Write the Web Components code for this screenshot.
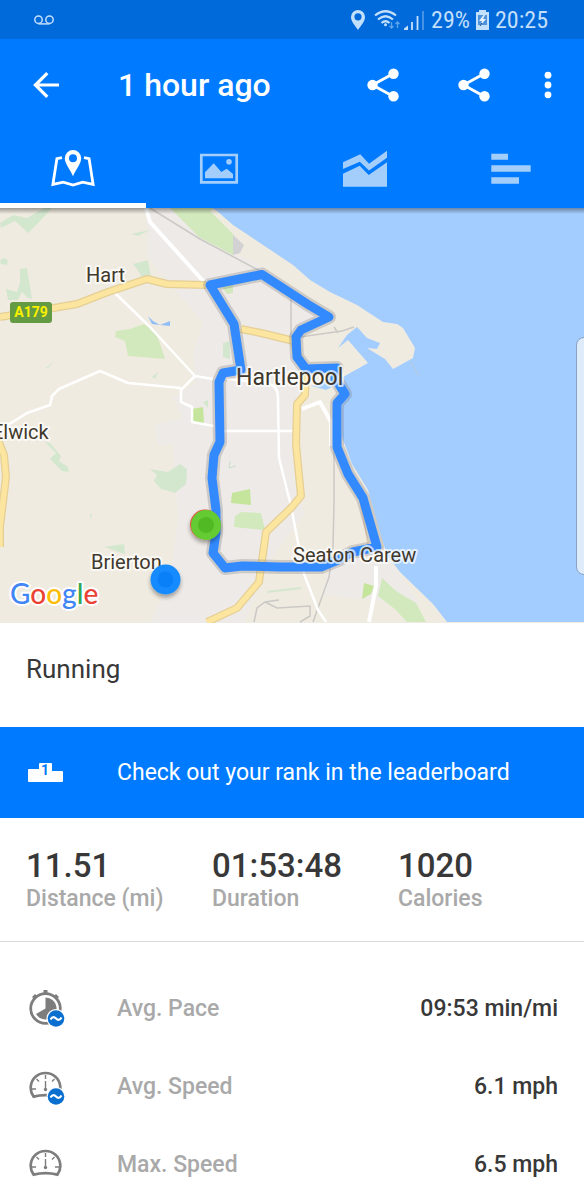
<!DOCTYPE html>
<html lang="en">
<head>
<meta charset="utf-8">
<meta name="viewport" content="width=device-width, initial-scale=1">
<title>1 hour ago</title>
<style>
  body {
    margin: 0;
    background: #fff;
    color: #383838;
    font-family: Roboto, "Liberation Sans", sans-serif;
  }
</style>
</head>
<body>
<activity-page></activity-page>

<script>
// shared by every element: attach the root and fill it
class BaseElement extends HTMLElement {
  constructor() {
    super();
    this.attachShadow({ mode: 'open' });
  }

  connectedCallback() {
    this.shadowRoot.innerHTML = this.render();
  }
}

class StatusBar extends BaseElement {
  render() {
    return `
      <style>
        :host {
          display: flex;
          align-items: center;
          height: 39px;
          padding: 0 36px 0 34px;
          background: #006ada;
          color: #c2dffb;
          font-family: "Roboto Condensed", Roboto, sans-serif;
          font-size: 24px;
          line-height: 40px;
          white-space: nowrap;
        }
        svg { display: block; }
        .system {
          display: flex;
          align-items: center;
          gap: 6px;
          margin-left: auto;
        }
      </style>
      <svg width="20" height="10" viewBox="0 0 20 10" fill="none" stroke="currentColor" stroke-width="1.5">
        <circle cx="4.5" cy="4.7" r="3.7"/><circle cx="15.5" cy="4.7" r="3.7"/><path d="M4.5 8.9h11"/>
      </svg>
      <div class="system">
        <svg width="14" height="20" viewBox="0 0 14 20" fill="currentColor">
          <path fill-rule="evenodd" d="M7 0a7 7 0 0 1 7 7c0 4.500-4 8.500-7 13-3-4.500-7-8.500-7-13a7 7 0 0 1 7-7zm0 3.200a3.600 3.600 0 1 0 0 7.200 3.600 3.600 0 0 0 0-7.200z"/>
        </svg>
        <svg width="54" height="20" viewBox="0 0 54 20" fill="none" stroke="currentColor" stroke-width="2.200">
          <path d="M4 5.500q10.500-8.500 21 0M7 9.500q7.500-6.500 15 0M10.500 13q4-3.500 8 0"/>
          <circle cx="14.500" cy="14.800" r="1.500" fill="currentColor" stroke="none"/>
          <path d="M20.500 12v6m-2-2l2 2 2-2M26.500 18v-6m-2 2l2-2 2 2" stroke-width="1.300" opacity=".5"/>
          <path d="M33 20v-1.500l4-3v4.500z" fill="currentColor" stroke="none"/>
          <path d="M41 20v-8M46.500 20V6" stroke-width="1.800"/>
          <path d="M52 20V1" stroke-width="1.800" opacity=".4"/>
        </svg>
        <span>29%</span>
        <svg width="13" height="20" viewBox="0 0 13 20">
          <path fill="currentColor" d="M3 0h7v2h3v18H0V2h3z"/>
          <path d="M2 5h9v10H2z" fill="#4f92dc"/>
          <path d="M7.500 5L3 11h3l-2 5 6-7H7l2-4z" fill="#e6f3ff"/>
          <path d="M4 16l2-3" stroke="#134a84"/>
        </svg>
        <time>20:25</time>
      </div>`;
  }
}

class ActionBar extends BaseElement {
  render() {
    const share = `
      <svg width="34" height="34" viewBox="0 0 34 34" fill="currentColor">
        <path d="M27.500 5.500L6.500 17l21 11.500" fill="none" stroke="currentColor" stroke-width="2.800"/>
        <circle cx="27.500" cy="5.700" r="5.200"/><circle cx="6.500" cy="17" r="5.200"/><circle cx="27.500" cy="28.300" r="5.200"/>
      </svg>`;
    return `
      <style>
        :host {
          display: flex;
          align-items: center;
          height: 91px;
          padding: 0 7px 0 26px;
          color: #fff;
        }
        h1 {
          flex: 1;
          margin: 0 0 0 52px;
          font-size: 32px;
          font-weight: 500;
          line-height: 40px;
          white-space: nowrap;
        }
        button {
          display: flex;
          align-items: center;
          justify-content: center;
          height: 64px;
          padding: 0;
          border: 0;
          background: none;
          color: inherit;
        }
        .back { width: 40px; }
        .share { width: 91px; }
        .more { width: 58px; }
      </style>
      <button class="back" aria-label="Back">
        <svg width="26" height="26" viewBox="0 0 26 26" fill="none" stroke="currentColor" stroke-width="3.200">
          <path d="M26 13H3M14.300 1.200L2.400 13l11.900 11.800"/>
        </svg>
      </button>
      <h1><slot></slot></h1>
      <button class="share" aria-label="Share activity">${share}</button>
      <button class="share" aria-label="Share">${share}</button>
      <button class="more" aria-label="More options">
        <svg width="8" height="28" viewBox="0 0 8 28" fill="currentColor">
          <circle cx="4" cy="4.200" r="3.400"/><circle cx="4" cy="14" r="3.400"/><circle cx="4" cy="23.800" r="3.400"/>
        </svg>
      </button>`;
  }
}

class TabBar extends BaseElement {
  render() {
    return `
      <style>
        :host { display: block; }
        nav {
          display: grid;
          grid-template-columns: repeat(4, 1fr);
          height: 78px;
        }
        button {
          display: flex;
          align-items: center;
          justify-content: center;
          padding: 5px 0 0;
          border: 0;
          border-bottom: 5px solid transparent;
          background: none;
          color: #a3cefb;
        }
        button[aria-selected="true"] {
          border-color: #fff;
          color: #fff;
        }
      </style>
      <nav role="tablist">
        <button role="tab" aria-selected="true" aria-label="Map">
          <svg width="44" height="40" viewBox="0 0 44 40" fill="none" stroke="currentColor" stroke-width="2.800">
            <path d="M11 8.700L5.900 9.700 1.900 35.400l10.400-2.300 9.700 3 9.700-3 10.400 2.300-4-25.700-5.100-1"/>
            <path d="M22 1a8.200 8.200 0 0 1 8.200 8.200c0 5-5 10.800-8.200 18-3.200-7.200-8.200-13-8.200-18A8.200 8.200 0 0 1 22 1zm0 4.200a4 4 0 1 0 0 8 4 4 0 0 0 0-8z" fill="currentColor" fill-rule="evenodd" stroke="none"/>
          </svg>
        </button>
        <button role="tab" aria-selected="false" aria-label="Photos">
          <svg width="44" height="40" viewBox="0 0 44 40" fill="currentColor">
            <path d="M4.300 6h35.400v27.400H4.300z" fill="none" stroke="currentColor" stroke-width="2.700"/>
            <path d="M8 29.300v-6l8.700-9 7.600 8.700 5.400-3.300L36 25v4.300z"/><circle cx="32" cy="12.700" r="2.800"/>
          </svg>
        </button>
        <button role="tab" aria-selected="false" aria-label="Graphs">
          <svg width="44" height="40" viewBox="0 0 44 40" fill="currentColor">
            <path d="M0 13.300l17.300-8L26 14.700l18-13v7L26 21.500l-9.200-8.800L0 20z"/>
            <path d="M0 24.700l16.700-8 9 9.300L44 13.300v24.400H0z"/>
          </svg>
        </button>
        <button role="tab" aria-selected="false" aria-label="Splits">
          <svg width="44" height="40" viewBox="0 0 44 40" fill="currentColor">
            <path d="M2.300 4.700H19v6H2.300zM2.300 16.300h39.400v6.400H2.300zM2.300 28.300H30v6.400H2.300z"/>
          </svg>
        </button>
      </nav>`;
  }
}

class RouteMap extends BaseElement {
  render() {
    return `
      <style>
        :host {
          display: block;
          position: relative;
          overflow: hidden;
          background: #f0ebe0;
        }
        svg { display: block; width: 100%; height: auto; }
        text {
          fill: #3f382c;
          font-family: Roboto, sans-serif;
          font-size: 20px;
          paint-order: stroke;
          stroke: #fff;
          stroke-opacity: .7;
          stroke-width: 4px;
          stroke-linejoin: round;
        }
        .town { font-size: 23px; }
        .sign { fill: #fbf000; font-size: 14px; font-weight: 700; stroke: none; }
        .brand { font-family: Lato, sans-serif; font-size: 28px; font-weight: 500; stroke-opacity: 1; }
        .edge {
          position: absolute;
          top: 129px;
          right: -8px;
          width: 16px;
          height: 238px;
          box-sizing: border-box;
          border: 1px solid #8aa3c4;
          border-radius: 8px;
          background: #deebfa;
        }
      </style>
      <svg viewBox="0 208 584 415" role="img" aria-label="Route map of Hartlepool">
        <defs>
          <filter id="drop" x="-50%" y="-50%" width="200%" height="200%">
            <feDropShadow dx="0" dy="3" stdDeviation="2" flood-opacity=".35"/>
          </filter>
          <linearGradient id="shade" x2="0" y2="1">
            <stop offset="0" stop-opacity=".35"/><stop offset="1" stop-opacity="0"/>
          </linearGradient>
        </defs>
        <!-- built-up areas -->
        <path fill="#eeeae7" d="M147 208h28l35 33 53 26 65 48-28 18 2 45-8 75 10 62-30 40-30 68H150l20-44 8-60-5-70 10-30-10-22 22-14-2-30 10-30-55-65z"/>
        <path fill="#eeeae7" d="M330 566l50-22 40 60-60-5-38-5zM155 425l30-8 5 25-32 4z"/>
        <!-- parks and woods -->
        <g fill="#d2e9bd">
          <path d="M170 208h45l-5 3 24 24-1 20-34-18z"/>
          <path d="M116 331l14-2 14-5 12 8 5 15 4 12-37-3-3-15-10-4z"/>
          <path d="M221 286l12-1v8l-6 1z"/>
          <path d="M235 516l6-4 20 1 4 17-31-3z"/>
          <path d="M382 578l14 13 20 12 10 19h-19l-12-13-17-13z"/>
        </g>
        <g fill="#c5e49c">
          <path d="M192 409l11-2 1 16-12-1zM232 493l18-4 1 16-20-2zM364 583l10 3-3 8-9 5z"/>
        </g>
        <g fill="#d3e7cf">
          <path d="M0 223l13-8 14 3 17-10h8l-13 14-11 11-13-12-14 7zM0 261l3-3 5 2-1 5-6-1zM20 269l7-1 5 31-4-1-6-6-4 8H8l-2-11 11 3 3-9zM133 264l15-4 3 17-8 2-6-10zM131 234l19-4-12 6zM46 368l9-8-7 8zM152 377l6-5-3 7z"/>
          <path d="M45 442l5 1 11 13-2 5 9 6 1 5-7-1-12-12 6-6zM150 469l18 3 12-8 7 5-1 15-11 9-6-2-8-2-7-8 3-6zM104 547l20-3 1 10zM90 514l2 0-1 6zM223 343l7-2v18l-7-2zM203 402l5-2v8zM267 591l34-4v2l-34 4z"/>
        </g>
        <path fill="#90bff8" d="M148 316l5 5 7 4-8-1zM160 325l10-4v5z"/>
        <path fill="#d2d1d3" d="M233 235l11 10-4 8-7 2z"/>
        <!-- sea and harbour -->
        <path fill="#a4cdff" d="M584 208H212l5 3 16 14 27 18 33 22 17 15 20 12 27 13 26 17 14 2 6 4 12 20-2 10-20 11-8-10-18-11 10 1 3-6-13-5-10-11-10 8-9 13 10-8 20 23-25 14 4 15-5 10v35l10 27 16 26 14 49 5 16 13 17 33 32 14 18h137z"/>
        <path fill="#a4cdff" d="M312 386l18-7 6 6-10 5z"/>
        <path d="M410 361l9 15" stroke="#b8c7d7" stroke-width="1"/>
        <!-- railways -->
        <g fill="none" stroke="#cbc9c6" stroke-width="1.500">
          <path d="M150 208l50 31 60 32M291 299v44M300 337l42-6 12-4M334 412v90l-1 45-4 30-16 45M334 327l4 6M254 622l3-14 8-6 14-2M265 602l12 6 33-2v10l-10 6"/>
        </g>
        <path d="M230 461l-1 7 7-2" stroke="#c9dfc8" fill="none"/>
        <!-- minor roads -->
        <g fill="none" stroke="#fff" stroke-linejoin="round">
          <path d="M146 208l4 14 55 61" stroke-width="4"/>
          <path d="M115 293l34 33 46 50-14 14 0 12 11 5v15l22 4M195 376l18 3M0 430l27-17 23-8 2-9 7-7 41-18 28 12 53 5" stroke-width="2.500"/>
          <path d="M222 431h74M222 378l47 6q9 2 9 14l1 60 12 48 13 68 14 36 8 12" stroke-width="2.500"/>
          <path d="M302 409l18-7 11 20v24M376 566v20l-7 36" stroke-width="4"/>
        </g>
        <!-- A roads: casing, then fill -->
        <g fill="none" stroke-linejoin="round">
          <path stroke="#e5cf95" stroke-width="8" d="M0 317l77-13 31-12 39-13 20 5 39 1M241 329l20 4 33 8 2 10 10 22-1 22-8 9-1 40 5 52-10 12-25 24-7 50-22 26-30 14M-4 435l8 20 2 22-6 50v20"/>
          <path stroke="#fce59f" stroke-width="5.500" d="M0 317l77-13 31-12 39-13 20 5 39 1M241 329l20 4 33 8 2 10 10 22-1 22-8 9-1 40 5 52-10 12-25 24-7 50-22 26-30 14M-4 435l8 20 2 22-6 50v20"/>
        </g>
        <path fill="none" stroke="#e3cdb4" stroke-width="1.500" d="M334 447l11 26 15 27 8 44"/>
        <!-- recorded route, halo first -->
        <g fill="none" stroke-linejoin="round">
          <path stroke="#77787a" stroke-opacity=".28" stroke-width="14" d="M210 285l52-10.500 46 30 21 12.500-28 13-5 7 1 20 9 12 31-1-2 10 10 16-8 9v44l11 27 15 24 14 49-24 5-15 8-17 7-41 0-38-1-17 2-12-15 3-20 0-23-4-32 2-23 6-13-1-60 4-9 18-3-7-46z"/>
          <path stroke="#338aff" stroke-width="9" d="M210 285l52-10.500 46 30 21 12.500-28 13-5 7 1 20 9 12 31-1-2 10 10 16-8 9v44l11 27 15 24 14 49-24 5-15 8-17 7-41 0-38-1-17 2-12-15 3-20 0-23-4-32 2-23 6-13-1-60 4-9 18-3-7-46z"/>
        </g>
        <rect x="10" y="302" width="42" height="21" rx="3" fill="#649b42"/>
        <text class="sign" x="31" y="317" text-anchor="middle">A179</text>
        <text x="86" y="282">Hart</text>
        <text class="town" x="236" y="385">Hartlepool</text>
        <text x="-8" y="439">Elwick</text>
        <text x="91" y="569">Brierton</text>
        <text x="293" y="562">Seaton Carew</text>
        <g filter="url(#drop)">
          <circle cx="205" cy="524.500" r="15" fill="#e25545"/>
          <circle cx="206" cy="525" r="15" fill="#65cb31"/>
          <circle cx="165.500" cy="579.500" r="15" fill="#168bff"/>
        </g>
        <circle cx="206" cy="525" r="8" fill="#51b923"/>
        <circle cx="165.500" cy="579.500" r="8" fill="#0a80f8"/>
        <text class="brand" x="10" y="604"><tspan fill="#4285f4">G</tspan><tspan fill="#ea4335">o</tspan><tspan fill="#fbbc05">o</tspan><tspan fill="#4285f4">g</tspan><tspan fill="#34a853">l</tspan><tspan fill="#ea4335">e</tspan></text>
        <rect y="208" width="584" height="6" fill="url(#shade)"/>
      </svg>
      <div class="edge"></div>`;
  }
}

class LeaderboardLink extends BaseElement {
  render() {
    return `
      <style>
        :host { display: block; background: #007bff; }
        a {
          display: flex;
          align-items: center;
          gap: 54px;
          min-height: 91px;
          padding: 0 28px;
          color: #fff;
          font-size: 23px;
          line-height: 28px;
          text-decoration: none;
        }
        svg { flex: none; }
        text { font: 700 14px Roboto, sans-serif; fill: #007bff; }
      </style>
      <a href="#leaderboard">
        <svg width="35" height="19" viewBox="0 0 35 19">
          <path d="M1 6h10V1q0-1 1-1h11q1 0 1 1v7h10q1 0 1 1v9q0 1-1 1H1q-1 0-1-1V7q0-1 1-1z" fill="#fff"/>
          <text x="17" y="12" text-anchor="middle">1</text>
        </svg>
        <slot></slot>
      </a>`;
  }
}

class StatItem extends BaseElement {
  render() {
    return `
      <style>
        :host { display: flex; flex-direction: column; }
        .value { font-size: 33px; font-weight: 500; line-height: 38px; }
        .label { color: #a9a9a9; font-size: 23px; font-weight: 500; line-height: 28px; }
      </style>
      <span class="value">${this.getAttribute('value')}</span>
      <span class="label"><slot></slot></span>`;
  }
}

const GAUGE = `
  <path d="M4.600 28.600A14.800 14.800 0 1 1 28.400 28.600Q16.500 25.600 4.600 28.600z" fill="none" stroke="#7d7d7d" stroke-width="2.700"/>
  <path d="M16.500 7v4M7.500 11l2.500 2.500M25.500 11L23 13.500M3 21h4M30 21h-4M16.500 13v9" stroke="#7d7d7d" stroke-width="1.400"/>
  <circle cx="16.500" cy="21.500" r="1.700" fill="#7d7d7d"/>`;

const AVERAGE = `
  <circle cx="27" cy="28.500" r="9.500" fill="#fff"/>
  <circle cx="27" cy="28.500" r="8.300" fill="#0b6fd0"/>
  <path d="M21.500 29.500q2.500-4 5.500-1t5.500-1" fill="none" stroke="#fff" stroke-width="2.200"/>`;

const METRIC_ICONS = {
  pace: `
    <path d="M14.500 0h4v4h-4zM3 7l3-3 2 2-3 3zM25 6l2-2 3 3-2 2z" fill="#7d7d7d"/>
    <circle cx="16.500" cy="18.500" r="14.800" fill="none" stroke="#7d7d7d" stroke-width="2.800"/>
    <path d="M16.500 18.500v-11a11 11 0 1 1-9.500 16.500z" fill="#7d7d7d"/>${AVERAGE}`,
  average: GAUGE + AVERAGE,
  speed: GAUGE
};

class MetricRow extends BaseElement {
  render() {
    return `
      <style>
        :host {
          display: flex;
          align-items: center;
          min-height: 78px;
          padding: 0 26px 0 29px;
          font-size: 23px;
          font-weight: 500;
          line-height: 28px;
        }
        svg { flex: none; margin-right: 52px; }
        .label { flex: 1; color: #a9a9a9; }
      </style>
      <svg width="36" height="38" viewBox="0 0 36 38">${METRIC_ICONS[this.getAttribute('icon')]}</svg>
      <span class="label">${this.getAttribute('label')}</span>
      <span><slot></slot></span>`;
  }
}

class ActivityPage extends BaseElement {
  render() {
    return `
      <style>
        :host {
          display: flex;
          flex-direction: column;
          height: 100vh;
        }
        header { flex: none; background: #007bff; }
        main {
          flex: 1;
          min-height: 0;
          overflow-y: auto;
          scrollbar-width: none;
        }
        h2 {
          margin: 0;
          padding: 30px 26px 42px;
          font-size: 26px;
          font-weight: 400;
          line-height: 32px;
        }
        .stats {
          display: grid;
          grid-template-columns: repeat(3, 1fr);
          padding: 29px 0 28px 26px;
          border-bottom: 1px solid #dcdcdc;
        }
        .metrics { padding: 28px 0; }
      </style>
      <header>
        <status-bar></status-bar>
        <action-bar>1 hour ago</action-bar>
        <tab-bar></tab-bar>
      </header>
      <main>
        <route-map></route-map>
        <h2>Running</h2>
        <leaderboard-link>Check out your rank in the leaderboard</leaderboard-link>
        <section class="stats">
          <stat-item value="11.51">Distance (mi)</stat-item>
          <stat-item value="01:53:48">Duration</stat-item>
          <stat-item value="1020">Calories</stat-item>
        </section>
        <section class="metrics">
          <metric-row icon="pace" label="Avg. Pace">09:53 min/mi</metric-row>
          <metric-row icon="average" label="Avg. Speed">6.1 mph</metric-row>
          <metric-row icon="speed" label="Max. Speed">6.5 mph</metric-row>
        </section>
      </main>`;
  }
}

customElements.define('status-bar', StatusBar);
customElements.define('action-bar', ActionBar);
customElements.define('tab-bar', TabBar);
customElements.define('route-map', RouteMap);
customElements.define('leaderboard-link', LeaderboardLink);
customElements.define('stat-item', StatItem);
customElements.define('metric-row', MetricRow);
customElements.define('activity-page', ActivityPage);
</script>
</body>
</html>
